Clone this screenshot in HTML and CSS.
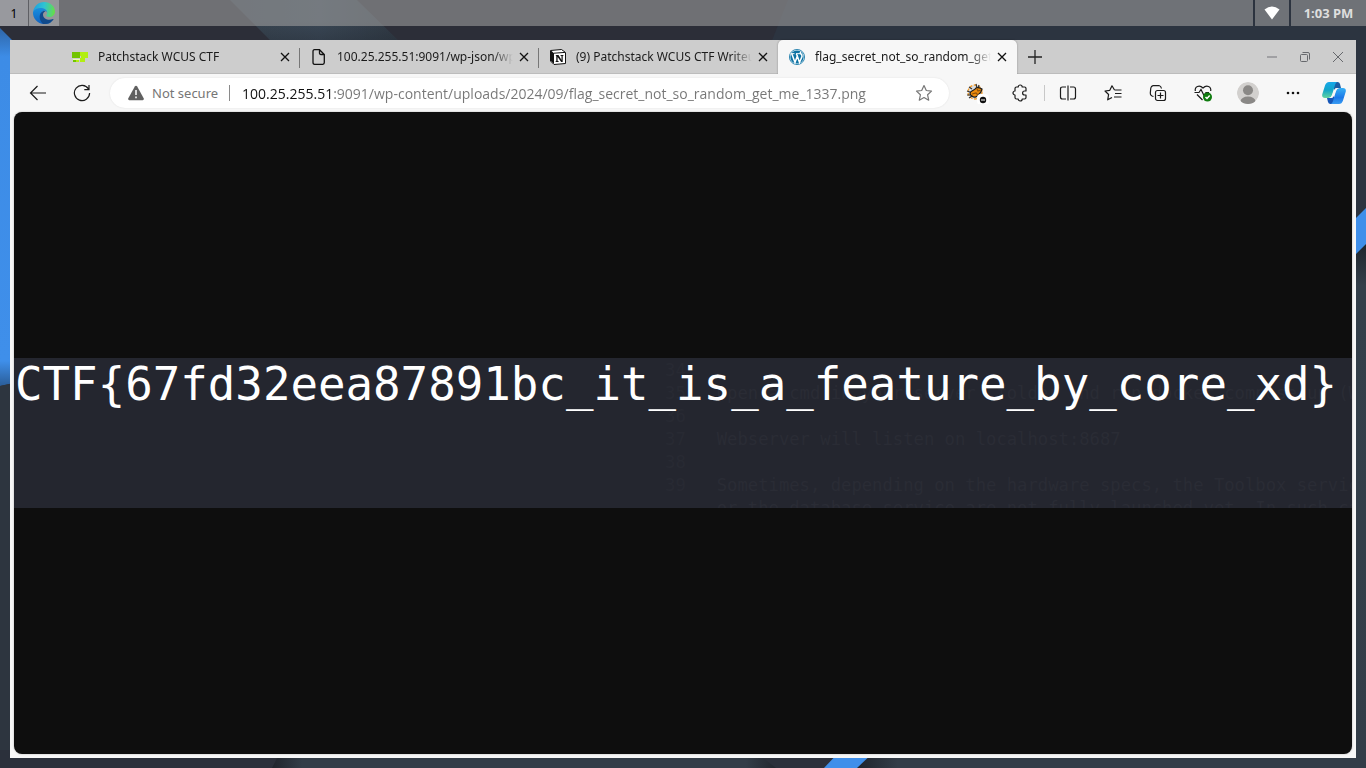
FILE: index.html
```html
<!DOCTYPE html>
<html lang="en">
<head>
<meta charset="utf-8">
<title>flag_secret_not_so_random_get_me_1337.png</title>
<link rel="stylesheet" href="styles.css">
</head>
<body>
<svg class="wallpaper" viewBox="0 0 1366 768" preserveAspectRatio="none" aria-hidden="true">
  <defs>
    <linearGradient id="band" x1="0" y1="0" x2="1" y2="0"><stop offset="0" stop-color="#37424e"/><stop offset=".5" stop-color="#3a4755"/><stop offset="1" stop-color="#2f3842"/></linearGradient>
    <linearGradient id="bandShade" x1="0" y1="0" x2="0" y2="1"><stop offset=".4" stop-color="#1c222b" stop-opacity="0"/><stop offset="1" stop-color="#1c222b" stop-opacity=".45"/></linearGradient>
    <linearGradient id="leftBlue" x1="0" y1="0" x2="0" y2="1"><stop offset="0" stop-color="#2e66a8"/><stop offset=".08" stop-color="#3d8ce6"/><stop offset=".93" stop-color="#3f8fea"/><stop offset="1" stop-color="#2a5d98"/></linearGradient>
    <linearGradient id="rightPlane" x1="0" y1="0" x2="0" y2="1"><stop offset="0" stop-color="#1f262e"/><stop offset=".08" stop-color="#343f4a"/><stop offset="1" stop-color="#333d48"/></linearGradient>
    <linearGradient id="shadeL" x1="0" y1="0" x2="1" y2="0"><stop offset="0" stop-color="#20252d"/><stop offset=".06" stop-color="#333d48"/><stop offset=".94" stop-color="#333d48"/><stop offset="1" stop-color="#22272f"/></linearGradient>
    <linearGradient id="shadeR" x1="0" y1="0" x2="1" y2="0"><stop offset="0" stop-color="#20252d"/><stop offset=".08" stop-color="#333d48"/></linearGradient>
  </defs>
  <rect width="1366" height="768" fill="#2c2e38"/>
  <path d="M788 0H1366V400H630Z" fill="#2c3440"/>
  <path d="M230 0H357L410 52H282Z" fill="url(#band)"/>
  <path d="M230 0H357L410 52H282Z" fill="url(#bandShade)"/>
  <path d="M0 28L14 42V383L0 386Z" fill="url(#leftBlue)"/>
  <path d="M0 386L14 383V768H0Z" fill="#2d353f"/>
  <rect x="0" y="750" width="1366" height="18" fill="#2b303b"/>
  <path d="M281 750H753L776 768H272Z" fill="url(#shadeL)"/>
  <path d="M868 750H1366V768H857Z" fill="url(#shadeR)"/>
  <path d="M841 750H876L857 768H824Z" fill="#3f8fea"/>
  <path d="M1350 260L1366 244V768H1350Z" fill="url(#rightPlane)"/>
  <path d="M1350 224L1366 208V244L1350 260Z" fill="#3f8fea"/>
</svg>

<header class="taskbar">
  <button class="workspace" type="button">1</button>
  <button class="task" type="button" aria-label="Microsoft Edge">
    <svg width="24" height="24" viewBox="0 0 24 24">
      <defs>
        <linearGradient id="eg1" x1="0" y1=".3" x2="1" y2=".4"><stop offset="0" stop-color="#1d9fdf"/><stop offset=".5" stop-color="#2fc3d3"/><stop offset="1" stop-color="#66dd48"/></linearGradient>
        <linearGradient id="eg2" x1="0" y1="0" x2="0" y2="1"><stop offset="0" stop-color="#168fe0"/><stop offset="1" stop-color="#1261bd"/></linearGradient>
      </defs>
      <path d="M1 11C2 5 6.500 1 12 1c6.500 0 11 4.500 11 9.500 0 3.500-2.600 5.500-5.500 5.500-2.400 0-3.600-.8-3.200-1.700.5-1 .9-1.500.9-2.600C15.200 9 12 7 8.500 7 5 7 2.200 8.700 1 11z" fill="url(#eg1)"/>
      <path d="M1 11c1.200-2.600 4-4 7.500-4 3.700 0 6.700 2 6.700 4.700C14.600 10 13 9.300 11.300 10 8 11.500 8 17 11.500 20c2.500 2.200 6 1.500 8.500.3C18 22.600 15.300 23.200 12 23 5.500 22.800.5 17.500 1 11z" fill="url(#eg2)"/>
      <path d="M11.300 10C6.500 12 6.500 19 11 22.900c4 .5 8-1 10.400-4.200.3-.5 0-.8-.5-.6-4.500 1.900-9.600-.1-9.900-4.400-.1-1.800 1.200-3 2.600-3.200-.8-.6-1.600-.8-2.300-.5z" fill="#114a8b"/>
    </svg>
  </button>
  <div class="tray">
    <button class="tray-item wifi" type="button" aria-label="Wi-Fi">
      <svg width="16" height="14" viewBox="0 0 16 14"><path d="M.5 3.500Q8-2.500 15.500 3.500L8 13.500z" fill="#fff"/></svg>
    </button>
    <time class="tray-item clock">1:03 PM</time>
  </div>
</header>

<main class="window">
  <nav class="tabs" aria-label="Tabs">
    <div class="tab">
      <svg class="favicon" width="16" height="16" viewBox="0 0 16 16"><path d="M0 3h8v6H0z" fill="#72c400"/><path d="M8 3h8v6h-3v4H8V9h1V7H8z" fill="#b2ee12"/><path d="M1 10h7v1H1z" fill="#eaffb0"/><path d="M1 11h3v2H1z" fill="#72c400"/><path d="M4 11h3v2H4z" fill="#b2ee12"/></svg>
      <a class="tab-title" href="#">Patchstack WCUS CTF</a>
      <button class="tab-close" type="button" aria-label="Close tab"><svg width="10" height="10" viewBox="0 0 10 10"><path d="M1 1l8 8M9 1L1 9"/></svg></button>
    </div>
    <div class="tab">
      <svg class="favicon" width="16" height="16" viewBox="0 0 16 16"><path d="M2 2.500Q2 .700 3.500.700H8.500L13.300 5.500V13.500Q13.300 15.300 11.800 15.300H3.500Q2 15.300 2 13.500zM8.500.700V4Q8.500 5.500 10 5.500H13.300" fill="none" stroke="#111" stroke-width="1.300"/></svg>
      <a class="tab-title" href="#">100.25.255.51:9091/wp-json/wp/</a>
      <button class="tab-close" type="button" aria-label="Close tab"><svg width="10" height="10" viewBox="0 0 10 10"><path d="M1 1l8 8M9 1L1 9"/></svg></button>
    </div>
    <div class="tab">
      <svg class="favicon" width="16" height="16" viewBox="0 0 16 16"><path d="M.5 1.500L11.500.500 15.500 3.500V14.500L4 15.500 .5 12z" fill="#fff"/><path d="M.5 1.500L11.500.500 15.500 3.500V14.500L4 15.500 .5 12z" fill="none" stroke="#111"/><path d="M1 1.500L4 4.200V15L1 12z" fill="#111"/><path d="M4 4.200L15 3.400" stroke="#111"/><path d="M5.500 6h3l3 5V7l-1-.3V6h3v.6l-.8.3v6h-1.500L7.600 8v4l1.100.3v.7H5.500v-.6l.8-.3V7z" fill="#111"/></svg>
      <a class="tab-title" href="#">(9) Patchstack WCUS CTF Writeup</a>
      <button class="tab-close" type="button" aria-label="Close tab"><svg width="10" height="10" viewBox="0 0 10 10"><path d="M1 1l8 8M9 1L1 9"/></svg></button>
    </div>
    <div class="tab active">
      <svg class="favicon" width="16" height="16" viewBox="0 0 16 16"><circle cx="8" cy="8" r="7.600" fill="#dceef6" stroke="#0d72a3" stroke-width=".8"/><circle cx="8" cy="8" r="6.600" fill="#0d72a3"/><path d="M1.500 4.700h4M7 4.700h4.200" stroke="#fff" stroke-width="1"/><path d="M2.800 4.800L6 13.500 8.300 7 7.300 4.800M8.300 7l2.200 6.500L13 7.500Q13.300 5.500 11.500 4.500 11 3.500 12 3" fill="none" stroke="#fff" stroke-width="1.500"/></svg>
      <a class="tab-title" href="#">flag_secret_not_so_random_get_me_1337</a>
      <button class="tab-close" type="button" aria-label="Close tab"><svg width="10" height="10" viewBox="0 0 10 10"><path d="M1 1l8 8M9 1L1 9"/></svg></button>
    </div>
    <button class="new-tab" type="button" aria-label="New tab"><svg width="14" height="14" viewBox="0 0 14 14"><path d="M7 0v14M0 7h14" stroke="#222" stroke-width="1.300"/></svg></button>
    <div class="window-controls">
      <button type="button" aria-label="Minimize"><svg width="12" height="12" viewBox="0 0 12 12"><path d="M1 6h10" stroke="#909194" stroke-width="1.500"/></svg></button>
      <button type="button" aria-label="Restore"><svg width="12" height="12" viewBox="0 0 12 12"><rect x="1.500" y="3.500" width="7" height="7" rx="1"/><path d="M3.500 1.500H9Q10.500 1.500 10.500 3V8.500"/></svg></button>
      <button type="button" aria-label="Close"><svg width="12" height="12" viewBox="0 0 12 12"><path d="M1 1l10 10M11 1L1 11"/></svg></button>
    </div>
  </nav>

  <div class="toolbar">
    <button class="nav-btn" type="button" aria-label="Back"><svg width="18" height="18" viewBox="0 0 18 18"><path d="M17 9H1.500M8.500 2l-7 7 7 7"/></svg></button>
    <button class="nav-btn" type="button" aria-label="Refresh"><svg width="18" height="18" viewBox="0 0 18 18"><path d="M15.500 5A7.600 7.600 0 1 0 16.600 9M16 1v4.700h-4.700"/></svg></button>
    <div class="omnibox">
      <button class="security" type="button">
        <svg width="16" height="16" viewBox="0 0 16 16"><path d="M8 .700Q8.800.700 9.200 1.400L15.800 13.400Q16.200 15 14.700 15.200H1.300Q-.2 15 .2 13.400L6.800 1.400Q7.200.700 8 .700z" fill="#606060"/><path class="mark" d="M8 5v5M8 11.500v1.700"/></svg>
        <span>Not secure</span>
      </button>
      <input class="url" type="text" aria-label="Address" value="100.25.255.51:9091/wp-content/uploads/2024/09/flag_secret_not_so_random_get_me_1337.png">
      <button class="star" type="button" aria-label="Add to favorites"><svg width="18" height="18" viewBox="0 0 18 18"><path d="M9 1.500l2.300 5 5.200.600-3.900 3.700 1.100 5.400L9 13.500l-4.700 2.700 1.100-5.400L1.500 7.100l5.200-.600z" fill="none" stroke="#777" stroke-width="1.200" stroke-linejoin="round"/></svg></button>
    </div>
    <div class="extensions">
      <button type="button" aria-label="FoxyProxy">
        <svg width="24" height="22" viewBox="0 0 24 22"><circle cx="10" cy="10" r="7" fill="#d9dcdf" stroke="#f39a25" stroke-width="1.300" stroke-dasharray="3 1.500"/><path d="M4 5l3 2M11 2l1 4M14 3l-1 4M2 9l3 1M2 13h4M4 16l3-2" stroke="#333"/><path d="M5 11C6 8 9 9 11 6c2-1 4 0 6 1-.5 2-1 4-3 5-1 3-5 4-7 2C5 13 5 12 5 11z" fill="#ee8b0c"/><path d="M7 12l4-1 2 2M12 7l1 2 3-1" stroke="#90520a" fill="none"/><rect x="12" y="12" width="12" height="11" rx="4" fill="#fff" stroke="none"/><circle cx="18" cy="18" r="3.200" fill="#111" stroke="none"/><path d="M16 18h4" stroke="#ddd"/></svg>
      </button>
      <button type="button" aria-label="Extensions"><svg width="18" height="18" viewBox="0 0 18 18"><path d="M5.500 3H7.200A2 2 0 0 1 11.200 3H13.500Q15 3 15 4.500V7H13.600A2 2 0 0 0 13.600 11H15V13.500Q15 15 13.500 15H11.200A2 2 0 0 1 7.200 15H5.500Q4 15 4 13.500V11A2 2 0 0 1 4 7V4.500Q4 3 5.500 3z" stroke-linejoin="round"/></svg></button>
    </div>
    <div class="actions">
      <button type="button" aria-label="Split screen"><svg width="18" height="18" viewBox="0 0 18 18"><path d="M7 3H3.500Q1.500 3 1.500 5v8Q1.500 15 3.500 15H7M11 3h3.500Q16.500 3 16.500 5v8Q16.500 15 14.500 15H11M9 1.500v15"/></svg></button>
      <button type="button" aria-label="Favorites"><svg width="18" height="18" viewBox="0 0 18 18"><path d="M10.500 6L8 1.800 5.800 6.300 1 7l3.600 3.500L3.700 15.800 8 13.400M10.500 6h7M11 9.500h6.500M10 13h7.500" stroke-linejoin="round"/></svg></button>
      <button type="button" aria-label="Collections"><svg width="18" height="18" viewBox="0 0 18 18"><path d="M4.500 12.500L3 12Q1 11 1.300 9L1.800 4Q2.200 2 4 1.600L10 1.500Q12 2 12.500 4.500"/><rect x="6.500" y="6.500" width="10" height="10" rx="2"/><path d="M11.500 8.500v6M8.500 11.500h6"/></svg></button>
      <button type="button" aria-label="Browser essentials"><svg width="18" height="18" viewBox="0 0 18 18"><path d="M1.300 7C.5 2.500 5.500.500 9 4c3.500-3.500 8.500-1.500 7.700 3M3 10.500l5.500 5.500M.5 8.500H5L7 5.500l3 6 2-3h3"/><circle cx="13.500" cy="13" r="4.500" fill="#107c10" stroke="none"/><path class="mark" d="M11.500 13l1.500 1.500 2.700-3"/></svg></button>
      <button type="button" aria-label="Profile"><svg width="22" height="22" viewBox="0 0 22 22"><clipPath id="face"><circle cx="11" cy="11" r="11"/></clipPath><g clip-path="url(#face)" stroke="none"><circle cx="11" cy="11" r="11" fill="#d2d0ce"/><circle cx="11" cy="8.200" r="5" fill="#8a8886"/><ellipse cx="11" cy="19.500" rx="7.500" ry="5" fill="#8a8886"/></g></svg></button>
      <button type="button" aria-label="Settings and more"><svg width="18" height="18" viewBox="0 0 18 18"><g fill="#111" stroke="none"><circle cx="4" cy="9" r="1.300"/><circle cx="9" cy="9" r="1.300"/><circle cx="14" cy="9" r="1.300"/></g></svg></button>
      <button class="copilot" type="button" aria-label="Copilot">
        <svg width="24" height="22" viewBox="0 0 24 22">
          <defs>
            <linearGradient id="cp1" x1="0" y1="0" x2="0" y2="1"><stop offset="0" stop-color="#17a7ea"/><stop offset=".5" stop-color="#12a5c9"/><stop offset="1" stop-color="#62d5a0"/></linearGradient>
            <linearGradient id="cp2" x1="0" y1="0" x2="0" y2="1"><stop offset="0" stop-color="#38b0f5"/><stop offset=".6" stop-color="#1b78e8"/><stop offset="1" stop-color="#3a9cf2"/></linearGradient>
          </defs>
          <g stroke="none">
            <path d="M13 0h2.500Q17.500 0 18 2L19 6H15Q13 6 12.500 8L10 2z" fill="#1b5da5"/>
            <path d="M11 22H8.500Q6.500 22 6 20L5 16H9Q11 16 11.500 14L14 20z" fill="#1656b8"/>
            <path d="M7 0H15Q13.500 .8 13 3L10 13Q9 16 6.500 16H3Q-.3 16 .2 12.500L3 3.500Q4.200 0 7 0z" fill="url(#cp1)"/>
            <path d="M17 22H9Q10.500 21.200 11 19L14 9Q15 6 17.500 6H21Q24.300 6 23.800 9.500L21 18.500Q19.800 22 17 22z" fill="url(#cp2)"/>
            <path d="M12.500 8Q13 6 15 6H17.500Q15 6 14 9L11.500 14Q11 16 9 16H6.500Q9 16 10 13z" fill="#f7f7f7"/>
          </g>
        </svg>
      </button>
    </div>
  </div>

  <section class="viewer">
    <figure class="capture">
      <div class="ghost" aria-hidden="true">
<pre class="lines">34
35
36
37
38
39</pre>
<pre class="source">

Open a cmd in your server  folder and run docker compose up (Windows)

Webserver will listen on localhost:8687

Sometimes, depending on the hardware specs, the Toolbox services
or the database service are not fully launched yet. In such cases</pre>
      </div>
      <p class="flag">CTF{67fd32eea87891bc_it_is_a_feature_by_core_xd}</p>
    </figure>
  </section>
</main>
</body>
</html>
```

FILE: styles.css
```css
* {
  box-sizing: border-box;
}

body {
  margin: 0;
  height: 100vh;
  display: flex;
  flex-direction: column;
  overflow: hidden;
  font-family: "Noto Sans", sans-serif;
  font-size: 12px;
  color: #1b1b1b;
  background: #2c2e38;
}

button {
  display: flex;
  align-items: center;
  justify-content: center;
  padding: 0;
  border: 0;
  background: none;
  font: inherit;
  color: inherit;
}

svg {
  display: block;
  flex: none;
}

.wallpaper {
  position: absolute;
  z-index: -1;
  width: 100%;
  height: 100%;
}

/* Desktop panel */
.taskbar {
  display: flex;
  height: 26px;
  flex: none;
  background: rgba(157, 156, 156, 0.6);
}

.workspace {
  width: 29px;
  border-right: 1px solid #5e5f64;
  background: rgba(220, 220, 226, 0.38);
  color: #000;
}

.task {
  width: 30px;
  background: rgba(220, 220, 226, 0.35);
}

.tray {
  display: flex;
  margin-left: auto;
}

.tray-item {
  border-left: 2px solid #2c333f;
}

.wifi {
  width: 36px;
}

.clock {
  width: 77px;
  text-align: center;
  font-size: 13px;
  font-weight: 700;
  line-height: 26px;
  color: #dedede;
}

/* Browser window */
.window {
  flex: 1;
  min-height: 0;
  display: flex;
  flex-direction: column;
  margin: 14px 10px 10px;
  background: #f7f7f7;
}

.tabs {
  display: flex;
  flex: none;
  height: 34px;
  padding-left: 51px;
  background: #cdcdcd;
  box-shadow: inset 0 -1px #bcbcbc;
}

.tab {
  display: flex;
  align-items: center;
  flex: 0 1 239px;
  min-width: 0;
  padding: 0 8px 0 11px;
  background: linear-gradient(#777, #777) right 8px / 1px 20px no-repeat;
}

.tab:has(+ .active) {
  background: none;
}

.tab.active {
  background: #f7f7f7;
  border-radius: 5px 5px 0 0;
  box-shadow: 0 0 2px rgba(0, 0, 0, 0.35);
  clip-path: inset(-2px -2px 0 -2px);
}

.tab-title {
  flex: 1;
  min-width: 0;
  margin: 0 4px 0 10px;
  padding-bottom: 1px;
  overflow: hidden;
  white-space: nowrap;
  color: inherit;
  text-decoration: none;
  mask-image: linear-gradient(to left, transparent, #000 20px);
}

.tab-close {
  width: 14px;
  height: 20px;
}

.tab-close svg {
  stroke: #111;
  stroke-width: 1.3;
}

.new-tab {
  width: 36px;
}

.window-controls {
  display: flex;
  margin-left: auto;
  padding-right: 2px;
}

.window-controls button {
  width: 33px;
}

.window-controls svg {
  fill: none;
  stroke: #66686c;
}

.toolbar {
  display: flex;
  align-items: center;
  flex: none;
  height: 38px;
  padding: 0 3px 0 6px;
}

.toolbar svg {
  fill: none;
  stroke: #1b1b1b;
  stroke-width: 1.2;
}

.nav-btn {
  width: 44px;
}

.omnibox {
  flex: 1;
  min-width: 0;
  display: flex;
  align-items: center;
  height: 30px;
  margin: 0 6px;
  padding: 0 16px 0 18px;
  border-radius: 15px;
  background: #fff;
  box-shadow: 0 0 2px rgba(0, 0, 0, 0.1);
}

.omnibox svg {
  stroke: none;
}

.toolbar .mark {
  stroke: #fff;
  stroke-width: 1.5;
}

.security {
  flex: none;
  gap: 8px;
  padding-right: 11px;
  border-right: 1px solid #8a8a8a;
  line-height: 16px;
  font-size: 13px;
  color: #767676;
}

.url {
  flex: 1;
  min-width: 0;
  height: 24px;
  margin-left: 12px;
  padding: 0;
  border: 0;
  outline: 0;
  font-family: "Open Sans", "Noto Sans", sans-serif;
  font-size: 14px;
  /* Host in black, the rest of the address in grey */
  background: linear-gradient(to right, #111 91px, #767676 91px);
  background-clip: text;
  color: transparent;
}

.extensions,
.actions {
  display: flex;
  flex: none;
}

.extensions button {
  width: 43px;
  height: 24px;
}

.extensions {
  padding-right: 4px;
  background: linear-gradient(#c8c8c8, #c8c8c8) right 4px / 1px 16px no-repeat;
}

.actions button {
  width: 45px;
  height: 24px;
}

.actions .copilot {
  width: 38px;
}

/* Image viewer */
.viewer {
  flex: 1;
  min-height: 0;
  display: flex;
  align-items: center;
  margin: 0 4px 4px;
  border-radius: 8px;
  overflow: hidden;
  background: #0e0e0e;
  box-shadow: 0 0 2px rgba(0, 0, 0, 0.3);
}

.capture {
  display: grid;
  width: 100%;
  margin: 0;
  aspect-ratio: 1338 / 150;
  overflow: hidden;
  background: #24262f;
  font-family: "DejaVu Sans Mono", monospace;
}

.flag,
.ghost {
  grid-area: 1 / 1;
  min-width: 0;
  min-height: 0;
  margin: 0;
  white-space: pre;
}

.flag {
  padding-left: 1px;
  font-size: 3.35vw;
  line-height: 54px;
  color: #fff;
}

.ghost {
  display: grid;
  grid-template-columns: 52fr 48fr;
  padding-top: 1px;
  font-size: 1.26vw;
  line-height: 23px;
  color: #2a2c35;
}

.ghost pre {
  margin: 0;
  min-width: 0;
  font: inherit;
}

.lines {
  padding-right: 24px;
  text-align: right;
  color: #282a33;
}

.source {
  padding-left: 7px;
}
```
